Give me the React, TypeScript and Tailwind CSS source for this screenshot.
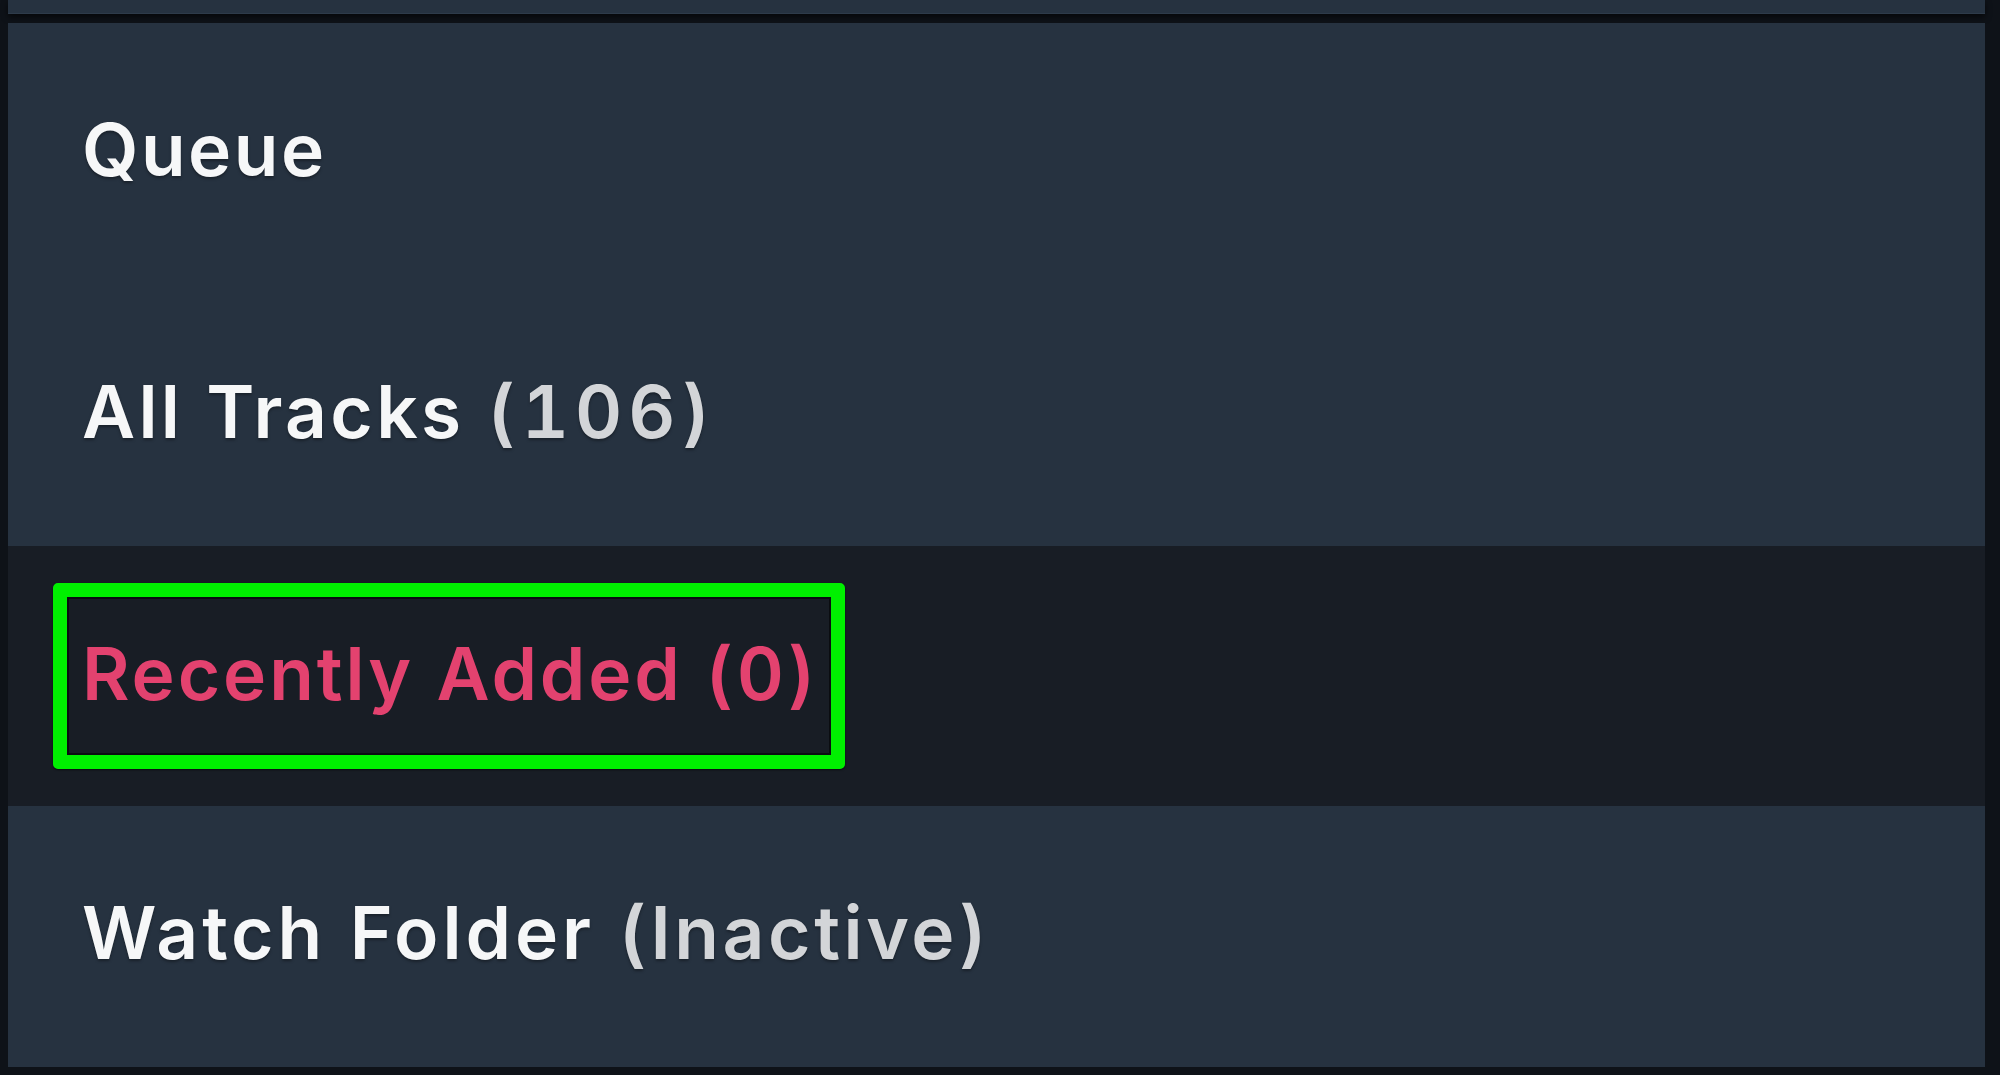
import React from "react";

const font = { fontFamily: "Inter, 'Liberation Sans', sans-serif" };

function Row({
  label,
  extra,
  selected,
  h,
  track,
  extraTrack,
}: {
  label: string;
  extra?: string;
  selected?: boolean;
  h: string;
  track: string;
  extraTrack?: string;
}) {
  if (selected) {
    return (
      <div className={`${h} flex items-center bg-[#181d25] pl-[45px]`}>
        <div className="rounded-[5px] border-[14px] border-[#00f000] shadow-[0_1px_2px_rgba(0,0,0,0.6)]">
          <div className="h-[158px] flex items-center pb-[6px] pl-[13px] pr-[10px] border-2 border-[#0b0d11]">
            <span
              className={`text-[73px] font-semibold leading-none ${track} text-[#e3426f] whitespace-nowrap tabular-nums`}
              style={font}
            >
              {label} <span className={extraTrack}>{extra}</span>
            </span>
          </div>
        </div>
      </div>
    );
  }
  return (
    <div className={`${h} flex items-center pl-[74px] pb-[8px]`}>
      <span
        className={`text-[73px] font-semibold leading-none ${track} text-[#f6f7f8] whitespace-nowrap tabular-nums [text-shadow:0_2px_3px_rgba(0,0,0,0.35)]`}
        style={font}
      >
        {label}
        {extra ? (
          <>
            {" "}
            <span className={`text-[#d3d5d8] ${extraTrack}`}>{extra}</span>
          </>
        ) : null}
      </span>
    </div>
  );
}

export default function App() {
  return (
    <div className="w-[2000px] h-[1075px] bg-[#0e1218] flex flex-col pl-[8px] pr-[15px] pb-[8px] overflow-hidden">
      <div className="h-[14px] shrink-0 bg-[#263240] border-b border-[#2e3b4a] shadow-[0_3px_6px_rgba(0,0,0,0.6)]" />
      <div className="mt-[9px] flex-1 flex flex-col bg-[#263240]">
        <Row label="Queue" h="h-[261px]" track="tracking-[2.5px]" />
        <Row
          label="All Tracks"
          extra="(106)"
          h="h-[262px]"
          track="tracking-[3.3px]"
          extraTrack="tracking-[6px]"
        />
        <Row
          label="Recently Added"
          extra="(0)"
          selected
          h="h-[260px]"
          track="tracking-[2.9px]"
          extraTrack="tracking-[3px]"
        />
        <Row
          label="Watch Folder"
          extra="(Inactive)"
          h="h-[261px]"
          track="tracking-[3.9px]"
          extraTrack="tracking-[3.6px]"
        />
      </div>
    </div>
  );
}
